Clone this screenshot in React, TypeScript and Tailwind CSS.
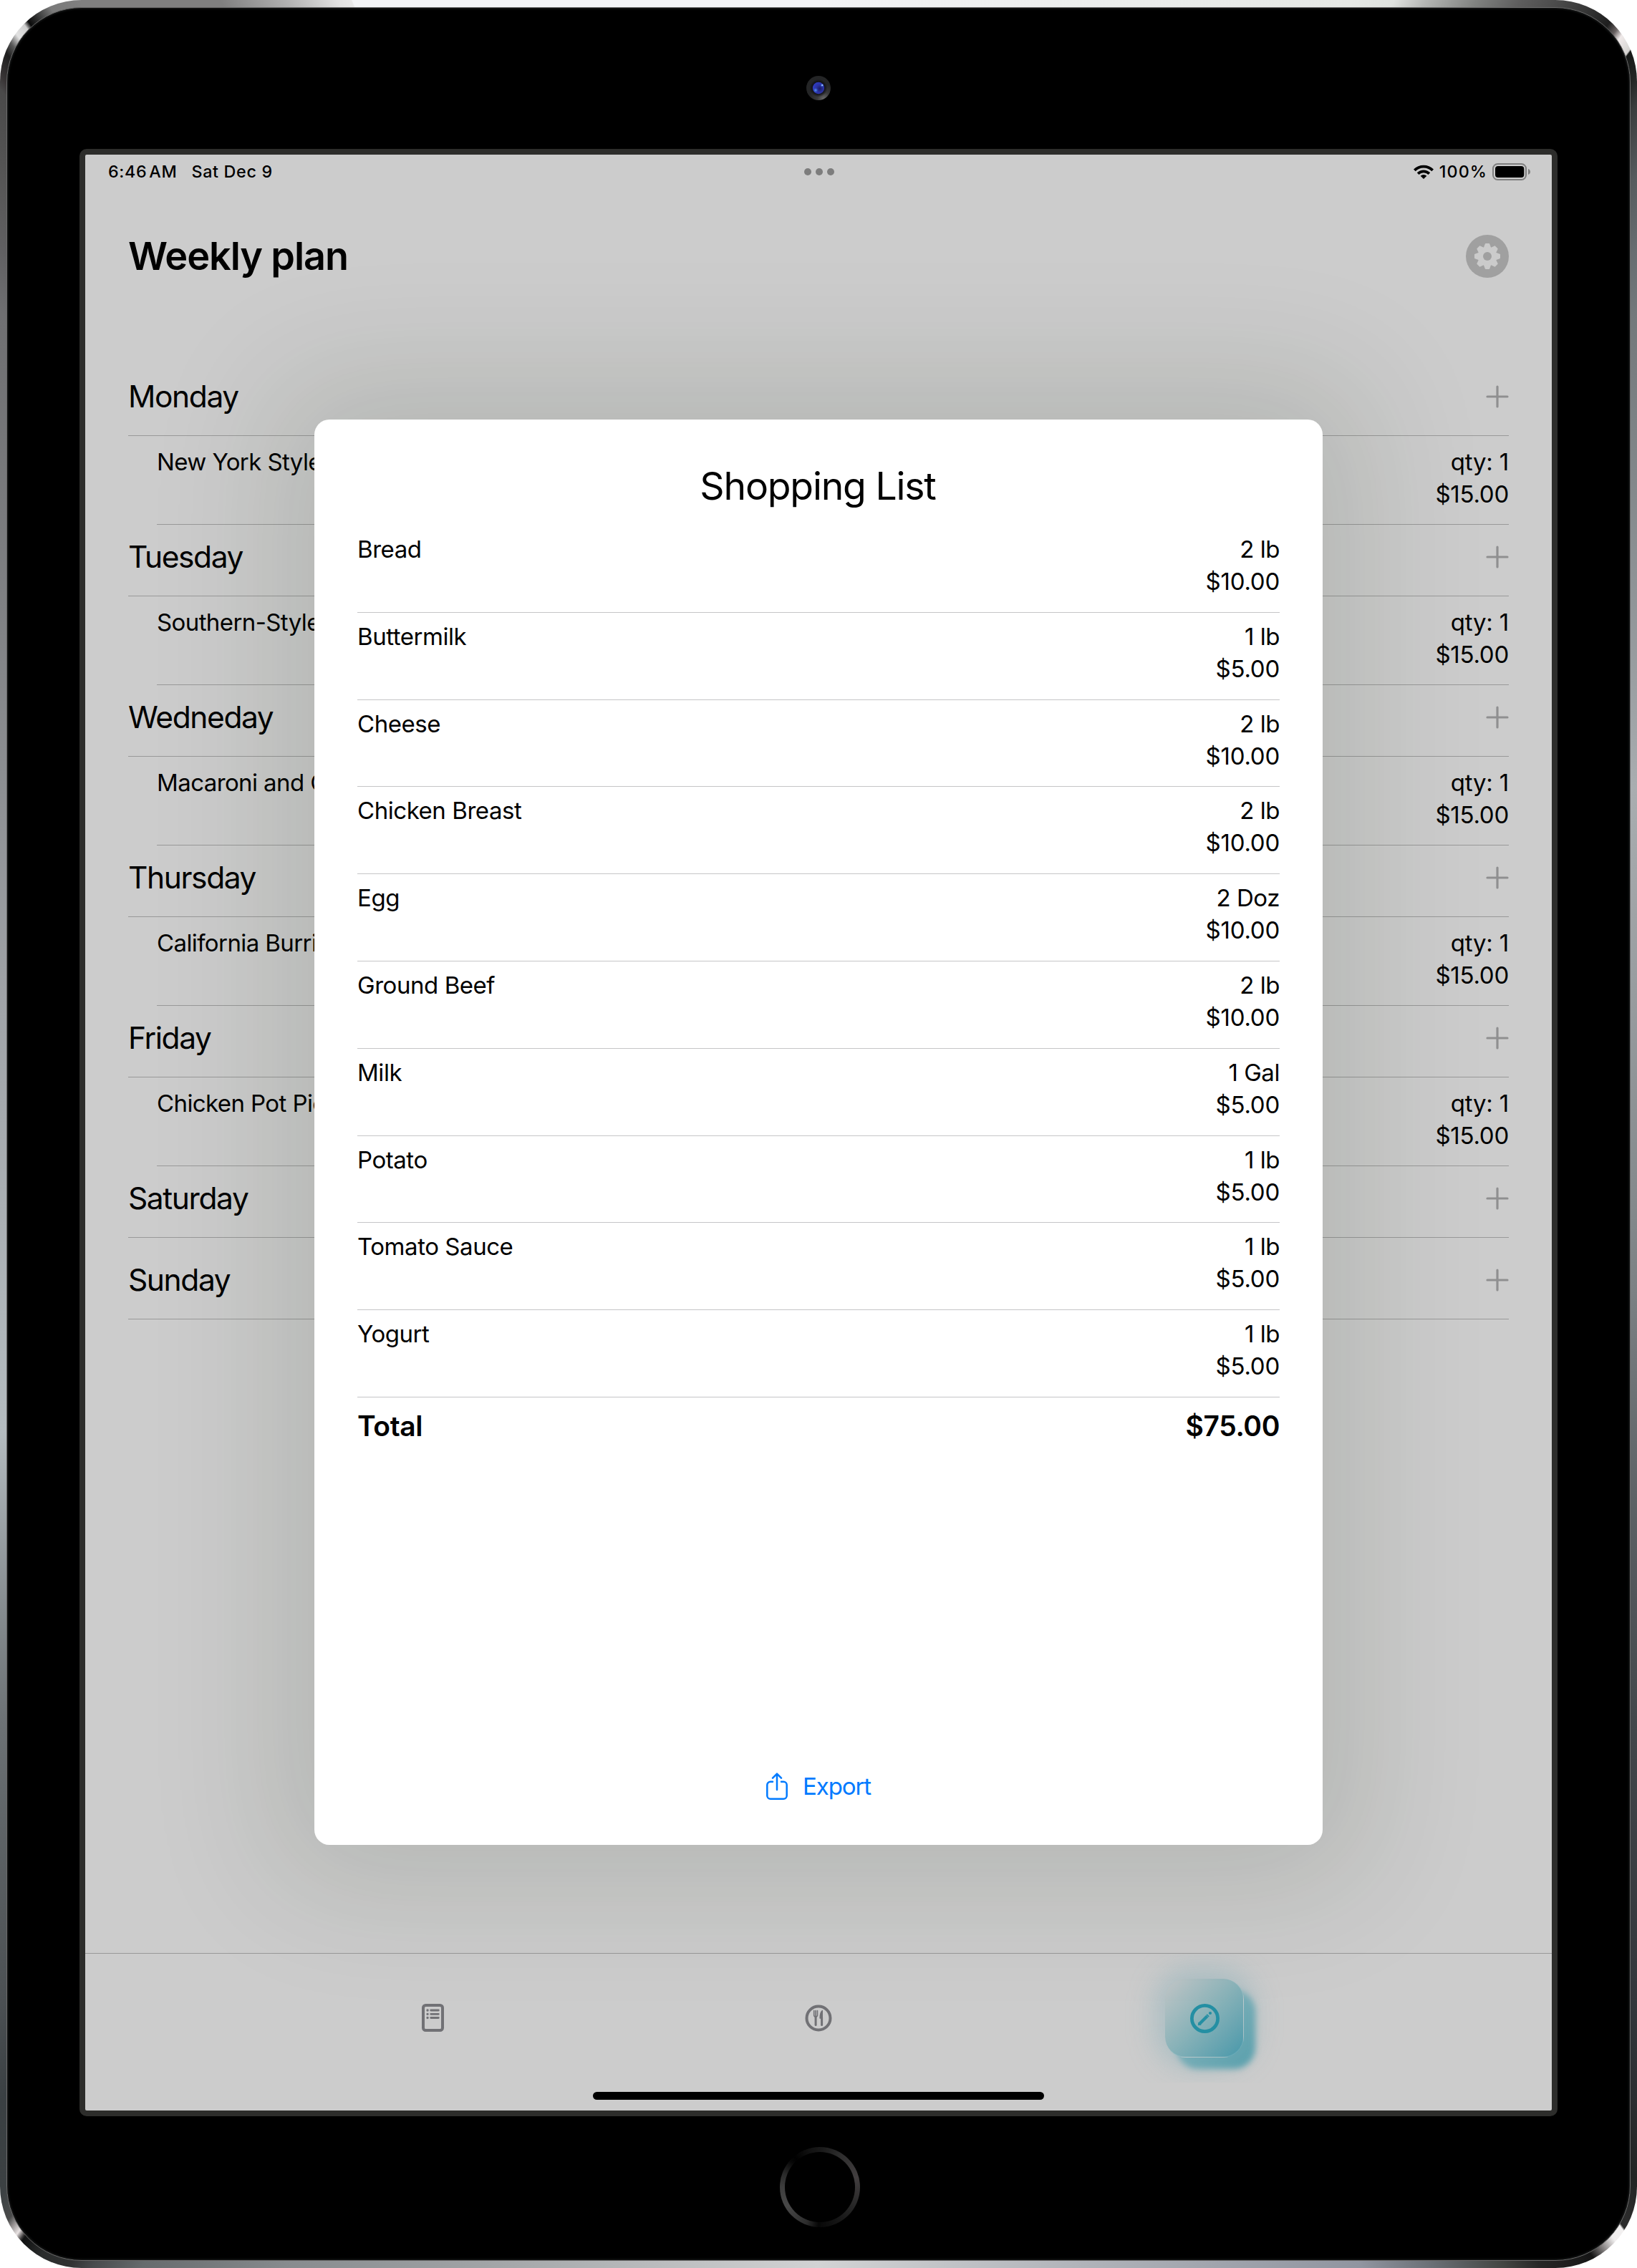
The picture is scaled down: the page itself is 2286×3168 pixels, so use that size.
import React from "react";

type Stop = [x: number, y: number, color: string];

/* Highlights along the aluminium rim, clockwise from the top centre. */
const rim: Stop[] = [
  [1143, 5, "#f3f4f6"],
  [1886, 5, "#e6e9e6"],
  [1945, 5, "#e0e3e0"],
  [1990, 5, "#b4b6b4"],
  [2060, 5, "#808280"],
  [2120, 5, "#5e5e5e"],
  [2176, 5, "#4a4a4a"],
  [2215, 15, "#363636"],
  [2244, 36, "#1e1e1e"],
  [2254, 46, "#6a6363"],
  [2261, 54, "#f0eaea"],
  [2270, 68, "#dcdad8"],
  [2273, 73, "#d4d2d0"],
  [2274, 75, "#161817"],
  [2281, 110, "#232524"],
  [2281, 150, "#3a3c3d"],
  [2281, 250, "#565b5e"],
  [2281, 350, "#676c70"],
  [2281, 440, "#73787b"],
  [2281, 1100, "#a9adb0"],
  [2281, 1800, "#7c8184"],
  [2281, 2400, "#43474b"],
  [2281, 2800, "#33363b"],
  [2281, 2930, "#2b2e31"],
  [2281, 3040, "#222424"],
  [2270, 3100, "#2c2c2c"],
  [2266, 3110, "#2a2a2a"],
  [2264, 3112, "#f2f0f0"],
  [2252, 3126, "#f0eeee"],
  [2238, 3138, "#8a8686"],
  [2222, 3150, "#141414"],
  [2200, 3158, "#1c1c1c"],
  [2150, 3163, "#262626"],
  [2100, 3163, "#424542"],
  [2000, 3163, "#6a6f75"],
  [1900, 3163, "#9095a0"],
  [1143, 3163, "#d2d3d4"],
  [400, 3163, "#878b8e"],
  [200, 3163, "#666b6d"],
  [130, 3163, "#474a4c"],
  [100, 3160, "#303232"],
  [60, 3147, "#2a2c2c"],
  [34, 3126, "#101111"],
  [32, 3124, "#3a3838"],
  [26, 3118, "#eae4e4"],
  [18, 3106, "#8a8686"],
  [14, 3098, "#4a4b4b"],
  [5, 3060, "#3c4143"],
  [5, 2930, "#3a4043"],
  [5, 2800, "#4b5053"],
  [5, 2400, "#6d7376"],
  [5, 2000, "#b4bcc0"],
  [5, 1400, "#a0a4a8"],
  [5, 440, "#6f7072"],
  [5, 350, "#606062"],
  [5, 250, "#565656"],
  [5, 130, "#4a4a4a"],
  [5, 112, "#3a3637"],
  [10, 75, "#1e1e1e"],
  [17, 62, "#5a5a5a"],
  [25, 50, "#e2e2e2"],
  [36, 37, "#d0d0d0"],
  [41, 32, "#0a0a0a"],
  [50, 24, "#2c2d2d"],
  [72, 13, "#7a7a7a"],
  [115, 5, "#808080"],
  [310, 5, "#808080"],
  [400, 5, "#b0b0b0"],
  [474, 5, "#e2e2e2"],
  [492, 5, "#e8e8e8"],
  [494, 5, "#f3f4f6"],
];

function rimGradient() {
  const stops = rim.map(([x, y, color], i) => {
    let deg = (Math.atan2(x - 1143, 1584 - y) * 180) / Math.PI;
    if (deg < 0 || (deg === 0 && i > 0)) deg += 360;
    return `${color} ${deg.toFixed(3)}deg`;
  });
  return `conic-gradient(from 0deg at 1143px 1584px, ${stops.join(", ")}, #f3f4f6 360deg)`;
}

const days: { day: string; meal?: string }[] = [
  { day: "Monday", meal: "New York Style" },
  { day: "Tuesday", meal: "Southern-Style" },
  { day: "Wedneday", meal: "Macaroni and C" },
  { day: "Thursday", meal: "California Burrito" },
  { day: "Friday", meal: "Chicken Pot Pie" },
  { day: "Saturday" },
  { day: "Sunday" },
];

const groceries = [
  ["Bread", "2 lb", "$10.00"],
  ["Buttermilk", "1 lb", "$5.00"],
  ["Cheese", "2 lb", "$10.00"],
  ["Chicken Breast", "2 lb", "$10.00"],
  ["Egg", "2 Doz", "$10.00"],
  ["Ground Beef", "2 lb", "$10.00"],
  ["Milk", "1 Gal", "$5.00"],
  ["Potato", "1 lb", "$5.00"],
  ["Tomato Sauce", "1 lb", "$5.00"],
  ["Yogurt", "1 lb", "$5.00"],
];

function Camera() {
  return (
    <svg width="34" height="34" viewBox="0 0 34 34">
      <defs>
        <radialGradient id="cam-ring" cx="0.72" cy="0.95" r="0.6">
          <stop offset="0" stopColor="#6a6a6a" />
          <stop offset="0.45" stopColor="#3a3a3b" />
          <stop offset="1" stopColor="#242526" />
        </radialGradient>
        <radialGradient id="cam-dark" cx="0.5" cy="0.5" r="0.5">
          <stop offset="0.6" stopColor="#0c0c10" />
          <stop offset="1" stopColor="#0c0c10" stopOpacity="0" />
        </radialGradient>
        <radialGradient id="cam-lens" cx="0.62" cy="0.55" r="0.6">
          <stop offset="0" stopColor="#1b1d5e" />
          <stop offset="0.5" stopColor="#2a31a0" />
          <stop offset="1" stopColor="#2f3cc0" />
        </radialGradient>
        <radialGradient id="cam-glint">
          <stop offset="0" stopColor="#5aa0f0" />
          <stop offset="1" stopColor="#3a6ae0" stopOpacity="0" />
        </radialGradient>
      </defs>
      <circle cx="17" cy="17" r="17" fill="url(#cam-ring)" />
      <circle cx="17" cy="17" r="12.5" fill="url(#cam-dark)" />
      <circle cx="17" cy="17" r="8.2" fill="url(#cam-lens)" />
      <circle cx="13" cy="20" r="3.4" fill="url(#cam-glint)" />
      <circle cx="22" cy="13.2" r="2.6" fill="url(#cam-glint)" />
      <circle cx="22.3" cy="13" r="1.1" fill="#a8c4fa" />
    </svg>
  );
}

function Wifi() {
  return (
    <svg width="28" height="20" viewBox="0 0 28 20" fill="none" stroke="#000" strokeWidth="3.8">
      <path d="M1.3 7.800a18 18 0 0 1 25.400 0" />
      <path d="M6.100 12.700a11.200 11.200 0 0 1 15.800 0" />
      <path d="M14 20l-4.300-4.300a6 6 0 0 1 8.600 0z" fill="#000" stroke="none" />
    </svg>
  );
}

function Battery() {
  return (
    <svg width="53" height="24" viewBox="0 0 53 24">
      <rect x="1" y="1" width="46" height="22" rx="6.5" fill="none" stroke="#7f7f7f" strokeWidth="2" />
      <rect x="4" y="4" width="40.3" height="16" rx="4" fill="#000" />
      <path d="M50 8c1.800.6 3 2.200 3 4s-1.200 3.400-3 4z" fill="#7f7f7f" />
    </svg>
  );
}

function Gear() {
  return (
    <svg width="60" height="60" viewBox="-30 -30 60 60">
      <circle r="30" fill="#a0a0a0" />
      <g fill="#cbcbcb" stroke="#cbcbcb" strokeWidth="2" strokeLinejoin="round">
        <circle r="12.200" />
        {[0, 45, 90, 135, 180, 225, 270, 315].map((a) => (
          <path key={a} d="M-4.300-11.500L-2.300-17h4.600L4.300-11.500z" transform={`rotate(${a})`} />
        ))}
      </g>
      <circle r="6" fill="#a0a0a0" />
    </svg>
  );
}

function Plus() {
  return (
    <svg width="32" height="32" viewBox="0 0 32 32" stroke="#8f8f90" strokeWidth="3.2" strokeLinecap="round">
      <path d="M16 2v28M2 16h28" />
    </svg>
  );
}

function RecipesIcon() {
  return (
    <svg className="-mt-px" width="31" height="39" viewBox="0 0 31 39" fill="none" stroke="#717175">
      <rect x="2" y="2" width="27" height="35" rx="3.500" strokeWidth="4" />
      <path d="M12.700 9h10.600M12.700 14.300h10.600M12.700 19.500h10.600" strokeWidth="2.800" strokeLinecap="round" />
      <path d="M8 9h.1M8 14.300h.1M8 19.500h.1" strokeWidth="3.300" strokeLinecap="round" />
    </svg>
  );
}

function MealsIcon() {
  return (
    <svg className="-mt-px" width="38" height="38" viewBox="0 0 38 38" fill="none" stroke="#717175">
      <circle cx="19" cy="19" r="16.500" strokeWidth="4" />
      <g strokeLinecap="round">
        <path d="M12.700 8.500v6.300c0 1.500 1 2.300 2.400 2.300s2.400-.8 2.400-2.300V8.500M15.100 8.500v8" strokeWidth="1.600" />
        <path d="M15.100 17v11.500" strokeWidth="3" />
        <path d="M23.600 18v10.500" strokeWidth="3" />
        <path d="M24.300 8.500c-2.200 1.800-3.200 5.400-3.200 10.500h3.200z" fill="#717175" strokeWidth="1.400" strokeLinejoin="round" />
      </g>
    </svg>
  );
}

function PlanIcon() {
  return (
    <svg width="41" height="41" viewBox="0 0 41 41" fill="none" stroke="#248fa3">
      <circle cx="20.500" cy="20.500" r="18.100" strokeWidth="4.800" />
      <path d="M13.300 27.700L23.800 17.200" strokeWidth="4.300" />
      <path d="M11.300 29.700l.6-3.700 3.200 3.200z" fill="#248fa3" strokeWidth="1" strokeLinejoin="round" />
      <path d="M24 17l1.300-1.300" strokeWidth="4.300" />
      <circle cx="28" cy="13" r="2.100" fill="#248fa3" stroke="none" />
    </svg>
  );
}

function ShareIcon() {
  return (
    <svg className="-mt-[2px]" width="30" height="38" viewBox="0 0 30 38" fill="none" stroke="#007aff" strokeWidth="2.500" strokeLinecap="round" strokeLinejoin="round">
      <path d="M9 12.800H5.800A4.500 4.500 0 0 0 1.300 17.300v14.900a4.500 4.500 0 0 0 4.500 4.500h18.400a4.500 4.500 0 0 0 4.500-4.500V17.300a4.500 4.500 0 0 0-4.500-4.500H21" />
      <path d="M15 24V1.800M9 7.600l6-6 6 6" />
    </svg>
  );
}

function StatusBar() {
  return (
    <div className="grid h-12 grid-cols-3 items-center pl-[32px] pr-[30px] text-[23.3px] font-[470] leading-[48px]">
      <div className="flex h-[48px] gap-[20px] self-start whitespace-nowrap tracking-[0.68px]">
        <span className="[word-spacing:-4px]">6:46 AM</span>
        <span>Sat Dec 9</span>
      </div>
      <div className="flex justify-center gap-[6px]">
        <i className="size-[10px] rounded-full bg-[#7d7d7d]" />
        <i className="size-[10px] rounded-full bg-[#7d7d7d]" />
        <i className="size-[10px] rounded-full bg-[#7d7d7d]" />
      </div>
      <div className="flex items-center justify-end">
        <Wifi />
        <span className="ml-[8px] mr-[7px] tracking-[1.080px]">100%</span>
        <Battery />
      </div>
    </div>
  );
}

function DayList() {
  return (
    <div className="pl-[60px] pr-[60px] pt-[57px]">
      {days.map(({ day, meal }) => (
        <section key={day} className={day === "Sunday" ? "mt-[14px]" : ""}>
          <div className="flex h-[100px] items-center justify-between border-b border-[#999999] pb-[10px] text-[42.5px]">
            <h2 className="tracking-[-1.4px]">{day}</h2>
            <Plus />
          </div>
          {meal && (
            <div className="ml-[40px] flex h-[124px] justify-between whitespace-nowrap border-b border-[#999999] pt-[14px] text-[33px] leading-[45px]">
              <span className="tracking-[-0.6px]">{meal}</span>
              <div className="text-right">
                <div className="tracking-[-0.2px]">qty: 1</div>
                <div className="tracking-[-0.25px]">$15.00</div>
              </div>
            </div>
          )}
        </section>
      ))}
    </div>
  );
}

function TabBar() {
  return (
    <div className="h-[220px] border-t border-[#999999]">
      <div className="mx-auto grid h-[180px] w-[1617px] grid-cols-3 place-items-center overflow-hidden">
        <RecipesIcon />
        <MealsIcon />
        <div className="relative grid size-[110px] place-items-center">
          <div className="absolute -inset-[14px] rounded-[50px] bg-[#5c9fae]/30 blur-[19px]" />
          <div className="absolute left-[16px] top-[16px] size-[110px] rounded-[30px] bg-linear-to-br from-[#8fb8bf] to-[#579fac] blur-[4px]" />
          <div className="absolute inset-0 rounded-[29px] border-b border-r border-white/15 bg-linear-to-br from-[#c2c6c7] via-[#88b2b8] to-[#4698aa]" />
          <div className="relative">
            <PlanIcon />
          </div>
        </div>
      </div>
    </div>
  );
}

function ShoppingList() {
  return (
    <div className="absolute left-[320px] top-[370px] flex h-[1991px] w-[1408px] flex-col rounded-[21px] bg-white px-[60px] shadow-[0_0_180px_55px_rgba(22,36,16,0.13)]">
      <h2 className="flex h-[148px] items-center justify-center pr-[2px] pt-[38px] text-[53.5px] leading-none tracking-[-1.200px]">
        Shopping List
      </h2>
      {groceries.map(([name, amount, price]) => (
        <div key={name} className="flex h-[121.8px] shrink-0 justify-between border-b border-[#c5c5c7] pt-[11px] text-[33px] leading-[45px]">
          <span className="tracking-[-0.45px]">{name}</span>
          <div className="text-right">
            <div className="tracking-[-0.45px]">{amount}</div>
            <div className="tracking-[-0.25px]">{price}</div>
          </div>
        </div>
      ))}
      <div className="flex h-[80px] items-center justify-between text-[39px] font-semibold tracking-[-0.4px]">
        <span>Total</span>
        <span>$75.00</span>
      </div>
      <button className="mt-auto flex h-[162px] items-center justify-center gap-[21px] text-[33px] tracking-[-1.100px] text-[#007aff]">
        <ShareIcon />
        <span>Export</span>
      </button>
    </div>
  );
}

export default function App() {
  return (
    <div className="h-[3168px] w-[2286px] bg-white font-['Inter',sans-serif] text-black">
      <div className="h-full w-full rounded-[114px] p-[9px] pb-[10px] pt-[10px]" style={{ background: rimGradient() }}>
        <div className="flex h-full w-full flex-col items-center rounded-[105px] border border-[#6b6b6b] bg-black shadow-[inset_0_0_3px_1px_#1c1e1e]">
          <div className="flex h-[197px] items-center justify-center pt-[27px]">
            <Camera />
          </div>
          <div className="h-[2748px] w-[2064px] rounded-[10px] border-8 border-[#2d2d2b] bg-[#2d2d2b]">
            <div className="relative flex h-full flex-col overflow-hidden rounded-[2px] bg-[#cccccc]">
              <StatusBar />
              <header className="flex h-[188px] items-center justify-between px-[60px]">
                <h1 className="-mt-[2px] text-[54px] font-semibold tracking-[-1.080px]">Weekly plan</h1>
                <Gear />
              </header>
              <DayList />
              <div className="mt-auto">
                <TabBar />
              </div>
              <ShoppingList />
              <div className="absolute bottom-[15px] left-[709px] h-[11px] w-[630px] rounded-full bg-black" />
            </div>
          </div>
          <div className="ml-[4px] mt-[43px] size-[112px] rounded-full bg-[conic-gradient(#181818_0deg,#2c2c2c_30deg,#423e3f_75deg,#262626_120deg,#161616_150deg,#0a0a0a_177deg,#060606_182deg,#2c2c2c_200deg,#484848_240deg,#3d3d3d_270deg,#2a2a2a_290deg,#060606_312deg,#000000_320deg,#121212_345deg,#181818_360deg)] p-[7px]">
            <div className="h-full w-full rounded-full bg-black" />
          </div>
        </div>
      </div>
    </div>
  );
}
